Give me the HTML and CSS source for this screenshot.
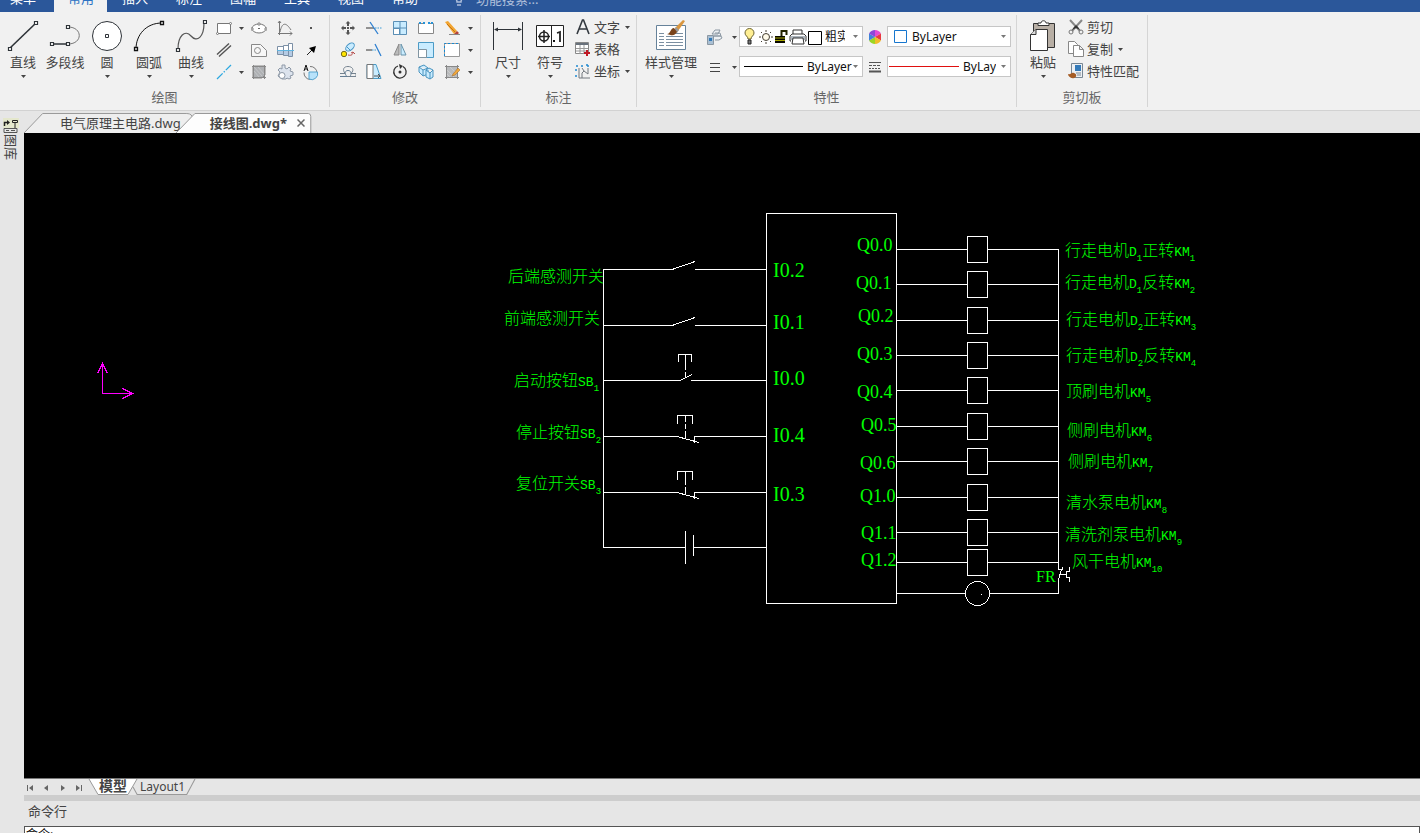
FILE: index.html
```html
<!DOCTYPE html>
<html lang="zh-CN">
<head>
<meta charset="utf-8">
<title>接线图.dwg</title>
<link rel="stylesheet" href="styles.css">
</head>
<body>
<svg class="defs" aria-hidden="true">
  <symbol id="caret" viewBox="0 0 5 3"><path d="M0 0h5L2.500 3z" fill="currentColor"/></symbol>
  <symbol id="coil" viewBox="0 0 22 28"><rect x=".5" y=".5" width="20" height="26" fill="#000" stroke="#fff"/></symbol>
</svg>

<nav class="menubar">
  <a class="menu" href="#">菜单</a>
  <a class="menu menu-active" href="#">常用</a>
  <a class="menu" href="#">插入</a>
  <a class="menu" href="#">标注</a>
  <a class="menu" href="#">图幅</a>
  <a class="menu" href="#">工具</a>
  <a class="menu" href="#">视图</a>
  <a class="menu" href="#">帮助</a>
  <label class="search">
    <svg width="10" height="16" viewBox="0 0 10 16" fill="none" stroke="#aebfdb" stroke-width="1.500"><path d="M3 11C3 8 1 8 1 5a4 4 0 0 1 8 0c0 3-2 3-2 6zM3 14h4"/></svg>
    <input type="text" placeholder="功能搜索...">
  </label>
</nav>

<header class="ribbon">
  <section class="group">
    <div class="tools draw">
      <button class="big"><svg width="32" height="32" viewBox="0 0 32 32" fill="#fff" stroke="#2e3338"><path d="M3 28L29 3" stroke-width="1.600"/><path d="M1.500 27.500h3v3h-3zM27.500 1.500h3v3h-3z" stroke-width="1.200"/></svg><span>直线</span><svg class="caret"><use href="#caret"/></svg></button>
      <button class="big"><svg width="32" height="32" viewBox="0 0 32 32" fill="none" stroke="#2e3338"><path d="M3 24h16" stroke-width="1.500"/><path d="M19 24c15 0 15-17 0-17" stroke="#777"/><path d="M1.500 22.500h3v3h-3zM17.500 22.500h3v3h-3zM17.500 5.500h3v3h-3z" fill="#fff" stroke-width="1.200"/></svg><span>多段线</span></button>
      <button class="big"><svg width="32" height="32" viewBox="0 0 32 32" fill="#fff" stroke="#2e3338"><circle cx="16" cy="16" r="14.500"/><path d="M14.500 14.500h3v3h-3z"/></svg><span>圆</span><svg class="caret"><use href="#caret"/></svg></button>
      <button class="big"><svg width="32" height="32" viewBox="0 0 32 32" fill="none" stroke="#111"><path d="M3 29C3 15 13 3 29 3"/><path d="M1.500 27.500h3v3h-3zM27.500 1.500h3v3h-3z" fill="#fff" stroke-width="1.300"/></svg><span>圆弧</span><svg class="caret"><use href="#caret"/></svg></button>
      <button class="big"><svg width="32" height="32" viewBox="0 0 32 32" fill="none" stroke="#555"><path d="M3 29c0-13 7-20 13-13s13 1 13-13" stroke-width="1.200"/><path d="M1.500 28.500h3v3h-3zM28.500.500h3v3h-3z" fill="#fff" stroke="#2e3338" stroke-width="1.200"/></svg><span>曲线</span><svg class="caret"><use href="#caret"/></svg></button>
      <div class="grid draw-grid">
        <button class="small"><svg width="16" height="16" viewBox="0 0 16 16" fill="#fff" stroke="#777"><path d="M1.500 3.500h13v10h-13z"/><circle cx="1.500" cy="13.500" r="1"/><circle cx="14.500" cy="3.500" r="1"/></svg></button>
        <button class="small"><svg class="caret"><use href="#caret"/></svg></button>
        <button class="small"><svg width="16" height="16" viewBox="0 0 16 16" fill="#fff" stroke="#777"><ellipse cx="8" cy="8.500" rx="7" ry="4.500"/><path d="M7 3h2v2H7zM0 8h2v2H0zM14 8h2v2h-2z" stroke="#888"/><path d="M7 8h2v1H7z" fill="#666" stroke="none"/></svg></button>
        <button class="small"><svg width="16" height="16" viewBox="0 0 16 16" fill="none" stroke="#777"><path d="M2.500 1v14M1 13.500h14M13 11.500l2 2-2 2M1 3l1.500-2L4 3M3 12C5 2 9 2 14 10"/></svg></button>
        <button class="small"><svg width="16" height="16" viewBox="0 0 16 16"><path d="M7 7h2v2H7z" fill="#555"/></svg></button>

        <button class="small"><svg width="16" height="16" viewBox="0 0 16 16" fill="none" stroke="#555" stroke-width="1.400"><path d="M1 12.500L13 1.500M3 14.500L15 3.500"/></svg></button>
        <span></span>
        <button class="small"><svg width="16" height="16" viewBox="0 0 16 16" fill="#f7f7f7" stroke="#888"><path d="M.500 2.500h9l6 6v6H.500z"/><circle cx="6.500" cy="8.500" r="3"/></svg></button>
        <button class="small"><svg width="17" height="16" viewBox="0 0 17 16" fill="#b5cbe4" stroke="#7c90a6"><path d="M.500 4.500h6v8h-6zM6.500 3.500h5v10h-5zM11.500 1.500h4v13h-4z"/><path d="M1 5h5v3H1zM7 4h4v4H7zM12 2h3v6h-3z" fill="#fff" stroke="none"/><path d="M0 8.500h17" stroke="#5fb4e0"/></svg></button>
        <button class="small"><svg width="16" height="16" viewBox="0 0 16 16"><path d="M4 13l5-5" stroke="#222"/><path d="M13 4l-2 7-5-5z" fill="#000"/></svg></button>

        <button class="small"><svg width="16" height="16" viewBox="0 0 16 16" fill="none" stroke="#2da8e0" stroke-width="1.300"><path d="M1 15L15 1" stroke-dasharray="8 1.500 1.500 1.500"/></svg></button>
        <button class="small"><svg class="caret"><use href="#caret"/></svg></button>
        <button class="small"><svg width="16" height="16" viewBox="0 0 16 16" fill="none" stroke="#888"><path d="M2 2h12v9l-3 3H2z" fill="#aeb0b3"/><path d="M2.500 1v14M1 2.500h14M1 13.500h14M13.500 1v14"/><path d="M3 7l5 6M3 3l8 9M7 3l6 7" stroke="#c4c6c8"/></svg></button>
        <button class="small"><svg width="17" height="16" viewBox="0 0 17 16" fill="#dce3ed" stroke="#8d98a6"><path d="M5 1h3v3l2 1 2-2 2 2-1 2 3 1v3l-3 1 1 2-2 1-2-1-1 1H5l-4-3 2-4-2-2 2-2 2 1z"/><circle cx="5" cy="11.500" r="3" fill="#fff"/></svg></button>
        <button class="small"><svg width="18" height="17" viewBox="0 0 18 17" fill="none" stroke="#777"><path d="M8 2.500a6.500 6.500 0 1 1-6 6"/><path d="M7 8h8.500a6 6 0 0 1-8.500 7z" fill="#b8e2fa" stroke="#5aa6cf"/><path d="M2 7l2-6 2 6M3 5h2" stroke="#111"/></svg></button>
      </div>
    </div>
    <h2>绘图</h2>
  </section>

  <section class="group">
    <div class="tools">
      <div class="grid edit-grid">
        <button class="small"><svg width="16" height="16" viewBox="0 0 16 16" fill="#555"><path d="M7 7h2v2H7zM8 1l2.500 2.500H9V6H7V3.500H5.500zM8 15l2.500-2.500H9V10H7v2.500H5.500zM1 8l2.500-2.500V7H6v2H3.500v1.500zM15 8l-2.500-2.500V7H10v2h2.500v1.500z"/></svg></button>
        <button class="small"><svg width="16" height="16" viewBox="0 0 16 16" fill="none"><path d="M0 8h8" stroke="#333"/><path d="M9 8h7" stroke="#3a9bd6" stroke-dasharray="1.500 1"/><path d="M4 2l8 12" stroke="#2c7ed0" stroke-width="1.300"/></svg></button>
        <button class="small"><svg width="16" height="16" viewBox="0 0 16 16" stroke="#5b8fb5"><path d="M1.500 1.500h13v13h-13z" fill="#c9ecff"/><path d="M1.500 8.500h6v6h-6zM8.500 1.500" fill="#fff"/><path d="M8 1v14M1 8h14"/></svg></button>
        <button class="small"><svg width="16" height="16" viewBox="0 0 16 16" fill="none"><path d="M6 3.500H.500v10h15v-10H10" fill="#fff" stroke="#888"/><path d="M5 2h2v2H5zM10 2h2v2h-2zM1 2h2v2H1zM13 2h2v2h-2z" fill="#2693d8"/></svg></button>
        <button class="small"><svg width="16" height="16" viewBox="0 0 16 16"><path d="M1 2l3-1 9 10-3 3z" fill="#f2a531"/><path d="M3 4l8 8" stroke="#c57412"/><path d="M10 14l3-3 2 2-2 2z" fill="#b3423a"/><path d="M5 14.500h11" stroke="#888"/></svg></button>
        <button class="small"><svg class="caret"><use href="#caret"/></svg></button>

        <button class="small"><svg width="16" height="16" viewBox="0 0 16 16"><circle cx="4" cy="12" r="2.700" fill="#ffe400" stroke="#746c20"/><ellipse cx="10" cy="5" rx="5" ry="3" transform="rotate(-40 10 5)" fill="#c9ecff" stroke="#4594c5"/><path d="M7 5l4 4" stroke="#4594c5"/><path d="M8 13c4 1 5-1 5-3l-2 1m2-1l2 2" stroke="#b44b4b" fill="none"/></svg></button>
        <button class="small"><svg width="16" height="16" viewBox="0 0 16 16" fill="none"><path d="M0 8h6" stroke="#333"/><path d="M6 8h5" stroke="#3a9bd6" stroke-dasharray="1.500 1"/><path d="M9 2l6 12" stroke="#2c7ed0" stroke-width="1.300"/></svg></button>
        <button class="small"><svg width="16" height="16" viewBox="0 0 16 16"><path d="M7 2v11H2z" fill="#bbb" stroke="#888"/><path d="M9 2v11h5z" fill="#c9ecff" stroke="#6993aa"/></svg></button>
        <button class="small"><svg width="16" height="16" viewBox="0 0 16 16"><path d="M.500.500h15v15H.500z" fill="#c9ecff" stroke="#4c9bc6"/><path d="M.500 7.500h8v8h-8z" fill="#fff" stroke="#8295a1"/></svg></button>
        <button class="small"><svg width="16" height="16" viewBox="0 0 16 16"><path d="M.500 1.500h15v13H.500z" fill="#fff" stroke="#999"/><path d="M.500 14V1.500h15" stroke="#1689d3" stroke-dasharray="2 2" fill="none"/></svg></button>
        <button class="small"><svg class="caret"><use href="#caret"/></svg></button>

        <button class="small"><svg width="16" height="16" viewBox="0 0 16 16" fill="none" stroke="#74828f"><path d="M0 9.500h5C2 5 4 2.500 8 2.500s7 3 3 7h5v3H0"/><path d="M0 12.500h7c-3-3-2-6 1-6s4 3 2 6" stroke="#637d94"/></svg></button>
        <button class="small"><svg width="16" height="16" viewBox="0 0 16 16"><path d="M1 .500h9l5 14H1z" fill="#c9ecff" stroke="#4c9bc6"/><path d="M1 .500h6v14H1z" fill="#fff" stroke="#777"/><path d="M8 12h6m-2-2l2 2-2 2" stroke="#555" fill="none"/></svg></button>
        <button class="small"><svg width="16" height="16" viewBox="0 0 16 16"><path d="M6 2a6.200 6.200 0 1 0 5 .500" fill="none" stroke="#333" stroke-width="1.300"/><path d="M7 0l4 2-3 3z" fill="#333"/><circle cx="8" cy="8" r="1.500" fill="#333"/></svg></button>
        <button class="small"><svg width="16" height="16" viewBox="0 0 16 16" fill="#c9ecff" stroke="#4a94bf"><path d="M1 3l5-2 4 3v6l-5 2-4-4zM1 3l4 3 5-2M5 6v6"/><path d="M8 6l3-2 4 2v7l-3 2-4-2zM8 6l4 3 3-3M12 9v6"/></svg></button>
        <button class="small"><svg width="16" height="16" viewBox="0 0 16 16"><path d="M2 2h11v11H2z" fill="#b9bbbd"/><path d="M1 2.500h14M1 13.500h14M2.500 1v14M13.500 1v14" stroke="#888"/><path d="M3 6l7 7M3 10l3 3M6 3l7 7" stroke="#ccc"/><path d="M9 10l5-6 2 2-5 5-3 1z" fill="#f1a83b" stroke="#9b6427" stroke-width=".500"/></svg></button>
        <button class="small"><svg class="caret"><use href="#caret"/></svg></button>
      </div>
    </div>
    <h2>修改</h2>
  </section>

  <section class="group">
    <div class="tools annotate">
      <button class="big"><svg width="32" height="32" viewBox="0 0 32 32" stroke="#2e3338" fill="none"><path d="M1.500 2v28M30.500 2v28M3 9.500h26"/><path d="M2 9.500l4-2v4zM30 9.500l-4-2v4z" fill="#2e3338" stroke="none"/></svg><span>尺寸</span><svg class="caret"><use href="#caret"/></svg></button>
      <button class="big"><svg width="32" height="32" viewBox="0 0 32 32" stroke="#222" fill="none"><path d="M2.500 5.500h27v21h-27zM17.500 5.500v21" fill="#fff"/><circle cx="10" cy="16.500" r="4.500" stroke-width="1.500"/><path d="M4 16.500h12M10 10v13" stroke-width="1.500"/><path d="M19 20h2v2h-2z" fill="#111" stroke="none"/><path d="M23 13l3-1v10" stroke-width="1.800"/></svg><span>符号</span><svg class="caret"><use href="#caret"/></svg></button>
      <div class="stack">
        <button class="wide"><svg width="16" height="16" viewBox="0 0 16 16" fill="none" stroke="#33393f" stroke-width="1.600"><path d="M2 15L7.500 1h1L14 15M4.500 10h7"/></svg><span>文字</span><svg class="caret"><use href="#caret"/></svg></button>
        <button class="wide"><svg width="16" height="16" viewBox="0 0 16 16"><path d="M.500 1.500h13v11H.500z" fill="#fff" stroke="#888"/><path d="M1 2h12v2H1z" fill="#68717b"/><path d="M1 7.500h12M1 10h12M5 4v9M9 4v9" stroke="#999"/><path d="M9 12h6M12 9v6" stroke="#c01824" stroke-width="2"/></svg><span>表格</span></button>
        <button class="wide"><svg width="16" height="16" viewBox="0 0 16 16" fill="none" stroke="#72787e"><path d="M4 5v10h11M7 15v-5l2-2 4 3V5M7 5l2 3"/><path d="M1 3h2M6 3h2M12 3h2M1 6v2M1 12v2M12 1v2" stroke="#2189cf" stroke-width="1.500"/></svg><span>坐标</span><svg class="caret"><use href="#caret"/></svg></button>
      </div>
    </div>
    <h2>标注</h2>
  </section>

  <section class="group">
    <div class="tools properties">
      <button class="big style-button"><svg width="32" height="32" viewBox="0 0 32 32"><path d="M1.500 5.500h29v24h-29z" fill="#fff" stroke="#66829a"/><path d="M4 13.500h5M4 16.500h5M4 19.500h5M4 22.500h5M4 25.500h5M11 16.500h17M11 19.500h17M11 22.500h17M11 25.500h17M20 13.500h8" stroke="#7b8fa1"/><path d="M20 8l8-8 2 1-7 10z" fill="#d9963f"/><path d="M21 7l3 3-2 3-3-3z" fill="#999"/><path d="M19 8l3 4c-3 5-6 3-10 2 4 0 3-6 7-6z" fill="#7a4319"/></svg><span>样式管理</span><svg class="caret"><use href="#caret"/></svg></button>
      <div class="property-grid">
        <button class="small"><svg width="16" height="16" viewBox="0 0 16 16" fill="#eef1f4" stroke="#8b97a2"><path d="M5 5l3-4h5l-2 4zM7 7h7l1 2-3 2H8M8 4h5l1 3H7"/><path d="M.500 6.500h6v9h-6z" fill="#a9bfd3"/><path d="M2 9h3v3H2z" fill="#3279b7" stroke="none"/></svg></button>
        <button class="small"><svg class="caret"><use href="#caret"/></svg></button>
        <div class="combo">
          <svg class="layer-icons" width="78" height="18" viewBox="0 0 78 18" fill="none">
            <path d="M4 11C4 8 1 8 1 5a4.500 4.500 0 0 1 9 0c0 3-3 3-3 6z" fill="#ffef93" stroke="#6b6331"/><path d="M4 12h3v4H4z" fill="#777" stroke="#222"/>
            <circle cx="22" cy="9" r="3.500" fill="#fffbea" stroke="#443e33"/><path d="M22 2v2M22 14v2M15 9h2M27 9h2M17 4l1 1M26 13l1 1M17 14l1-1M26 5l1-1" stroke="#443e33"/>
            <path d="M31 8h10v7H31z" fill="#080800"/><path d="M31 10h10M31 12.500h10" stroke="#aaa800"/><path d="M37.500 8V3h5v4" stroke="#222200" stroke-width="2"/>
            <path d="M49 6V2h9v4M47 13h-1V8l2-2h12l2 2v5h-1" fill="#fff" stroke="#333"/><path d="M47 8h14v4H47z" fill="#aeb6be"/><path d="M49 10h10l1 6H48z" fill="#fff" stroke="#333"/>
            <path d="M64.500 3.500h13v13h-13z" fill="#fff" stroke="#000"/>
          </svg>
          <select class="layer-select" aria-label="图层"><option>粗实线层</option></select>
          <svg class="caret"><use href="#caret"/></svg>
        </div>
        <button class="small"><svg width="14" height="14" viewBox="0 0 14 14"><path d="M7 7V0a7 7 0 0 1 6 3.500z" fill="#e44ad2"/><path d="M7 7l6-3.500v7z" fill="#e83a3f"/><path d="M7 7l6 3.500A7 7 0 0 1 7 14z" fill="#f1bd28"/><path d="M7 7v7a7 7 0 0 1-6-3.500z" fill="#9bd624"/><path d="M7 7l-6 3.500v-7z" fill="#3f83d9"/><path d="M7 7L1 3.500A7 7 0 0 1 7 0z" fill="#8b47d8"/></svg></button>
        <div class="combo">
          <svg class="swatch" width="13" height="13" viewBox="0 0 13 13"><path d="M.500.500h12v12H.500z" fill="#fff" stroke="#1676ce"/></svg>
          <select aria-label="颜色"><option>ByLayer</option></select>
          <svg class="caret"><use href="#caret"/></svg>
        </div>

        <button class="small"><svg width="10" height="10" viewBox="0 0 10 10" stroke="#444"><path d="M0 1.500h10M0 5.500h10M0 9.500h10"/></svg></button>
        <button class="small"><svg class="caret"><use href="#caret"/></svg></button>
        <div class="combo">
          <svg class="line-a" width="59" height="3"><path d="M0 1.500h59" stroke="#000"/></svg>
          <select class="linetype" aria-label="线型"><option>ByLayer</option></select>
          <svg class="caret"><use href="#caret"/></svg>
        </div>
        <button class="small"><svg width="12" height="11" viewBox="0 0 12 11" stroke="#555"><path d="M0 .500h12"/><path d="M0 3.500h12" stroke-dasharray="3 1"/><path d="M0 6.500h12" stroke-dasharray="2 1"/><path d="M0 9.500h12" stroke-width="2"/></svg></button>
        <div class="combo">
          <svg class="line-b" width="70" height="3"><path d="M0 1.500h70" stroke="#e01010"/></svg>
          <select class="lineweight" aria-label="线宽"><option>ByLayer</option></select>
          <svg class="caret"><use href="#caret"/></svg>
        </div>
      </div>
    </div>
    <h2>特性</h2>
  </section>

  <section class="group">
    <div class="tools clipboard">
      <button class="big"><svg width="32" height="32" viewBox="0 0 32 32" stroke="#333"><path d="M6.500 3.500h21v24h-21z" fill="#b8afa5"/><path d="M11 5.500V3h3c0-3 5-3 5 0h3v2.500z" fill="#fff"/><path d="M9 9.500h11.500v21h-17v-16z" fill="#fff"/><path d="M3.500 14.500H9v-5" fill="#ddd"/></svg><span>粘贴</span><svg class="caret"><use href="#caret"/></svg></button>
      <div class="stack">
        <button class="wide"><svg width="16" height="16" viewBox="0 0 16 16" fill="none"><path d="M2 1l10 11M14 1L4 12" stroke="#888" stroke-width="2"/><path d="M6 8l2-2 2 2 2 3-4-2-4 2z" fill="#333"/><circle cx="3" cy="13" r="2" stroke="#777"/><circle cx="13" cy="13" r="2" stroke="#777"/></svg><span>剪切</span></button>
        <button class="wide"><svg width="16" height="16" viewBox="0 0 16 16" fill="#fff" stroke="#888"><path d="M.500.500h6l3 3v9h-9z"/><path d="M5.500 4.500h6l4 4v7h-10zM11.500 4.500v4h4"/></svg><span>复制</span><svg class="caret"><use href="#caret"/></svg></button>
        <button class="wide"><svg width="16" height="16" viewBox="0 0 16 16"><path d="M3.500.500h11v14h-11z" fill="#edf0f3" stroke="#788693"/><path d="M7 2h6v6H7z" fill="#347ab9"/><path d="M8 10h5M9 12h4" stroke="#788693"/><path d="M0 11c3 1 3-2 6-1s3 4 0 5-6-2-6-4z" fill="#a55c25"/></svg><span>特性匹配</span></button>
      </div>
    </div>
    <h2>剪切板</h2>
  </section>
</header>

<div class="workspace">
  <aside class="palette">
    <svg width="16" height="16" viewBox="0 0 16 16" fill="none" stroke="#222"><path d="M0 0h16v10H0z" fill="#e4e7cc" stroke="none"/><path d="M1.500 8V4.500h3" stroke-width="1.500"/><path d="M4 2l3 2.500L4 7z" fill="#222" stroke="none"/><path d="M9.500 2.500h5v2h-5zM12 4v6"/><path d="M1 10.500h13v4H1zM3 12.500h3M8 12.500h4" stroke="#555"/></svg>
    <span>图库</span>
  </aside>
  <main class="document">
    <div class="doc-tabs">
      <button class="doc-tab"><svg class="tab-shape" viewBox="0 0 172 20" preserveAspectRatio="none"><path d="M0 20L19 .500h147q6 0 6 6V20" fill="#eee" stroke="#999"/></svg><span>电气原理主电路.dwg</span></button>
      <button class="doc-tab doc-tab-active"><svg class="tab-shape" viewBox="0 0 136 20" preserveAspectRatio="none"><path d="M0 20L19 .500h114q2.500 0 2.500 3V20" fill="#fdfdfd" stroke="#999"/></svg><span>接线图.dwg*</span><svg class="close" width="8" height="8" viewBox="0 0 8 8"><path d="M.500.500l7 7M7.500.500l-7 7" stroke="#666" stroke-width="1.500"/></svg></button>
    </div>

    <svg class="drawing">
      <g transform="translate(-24 -133)">
        <g class="ucs"><path d="M102.500 363v30.500h30M97.500 373.500l5-10 5 10M122.500 388.500l10 5-10 5"/></g>
        <g class="wires">
          <path d="M603.500 269v278.500H685.500M603 269.500h69l23-8M695 269.500h71M603 325.500h69l23-8M695 325.500h71M603 380.500h77l12-6M691 380.500h75"/>
          <path d="M678.500 362v-7.500h13v7.500M685.500 354v16M685.500 372v6"/>
          <path d="M603 436.500h74l22 6M694.500 443v-6.500H766M677.500 424v-8.500h15v8.500M685.500 415v7M685.500 424v5M685.500 431v8"/>
          <path d="M603 492.500h74l22 6M694.500 499v-6.500H766M677.500 480v-8.500h15v8.500M685.500 471v14M685.500 487v8"/>
          <path d="M685.500 531v33M693.500 535v21M693 547.500h73"/>
          <rect x="766.500" y="213.500" width="130" height="390"/>
          <path d="M896 249.500h162.500V569M896 284.500h162M896 320.500h162M896 355.500h162M896 390.500h162M896 426.500h162M896 461.500h162M896 497.500h162M896 532.500h162M896 562.500h162"/>
          <path d="M896 593.500h69M990 593.500h68.500V580l3-11M1058 569.500h4.500v-3M1060 574.500h6M1069.500 567v4.500h-3v6h3v4"/>
          <circle cx="977.500" cy="593.500" r="12"/><path d="M981 594.500h1"/>
        </g>
        <use href="#coil" x="967" y="236" width="22" height="28"/>
        <use href="#coil" x="967" y="271" width="22" height="28"/>
        <use href="#coil" x="967" y="307" width="22" height="28"/>
        <use href="#coil" x="967" y="342" width="22" height="28"/>
        <use href="#coil" x="967" y="377" width="22" height="28"/>
        <use href="#coil" x="967" y="413" width="22" height="28"/>
        <use href="#coil" x="967" y="448" width="22" height="28"/>
        <use href="#coil" x="967" y="484" width="22" height="28"/>
        <use href="#coil" x="967" y="519" width="22" height="28"/>
        <use href="#coil" x="967" y="549" width="22" height="28"/>
        <g class="labels">
          <text x="508" y="282">后端感测开关</text>
          <text x="504" y="324">前端感测开关</text>
          <text x="514" y="386">启动按钮<tspan class="code">SB</tspan><tspan class="sub" dy="5">1</tspan></text>
          <text x="516" y="438">停止按钮<tspan class="code">SB</tspan><tspan class="sub" dy="5">2</tspan></text>
          <text x="516" y="489">复位开关<tspan class="code">SB</tspan><tspan class="sub" dy="5">3</tspan></text>
          <text x="1065" y="256">行走电机<tspan class="code">D</tspan><tspan class="sub" dy="5">1</tspan><tspan dy="-5">正转</tspan><tspan class="code">KM</tspan><tspan class="sub" dy="5">1</tspan></text>
          <text x="1065" y="288">行走电机<tspan class="code">D</tspan><tspan class="sub" dy="5">1</tspan><tspan dy="-5">反转</tspan><tspan class="code">KM</tspan><tspan class="sub" dy="5">2</tspan></text>
          <text x="1066" y="325">行走电机<tspan class="code">D</tspan><tspan class="sub" dy="5">2</tspan><tspan dy="-5">正转</tspan><tspan class="code">KM</tspan><tspan class="sub" dy="5">3</tspan></text>
          <text x="1066" y="361">行走电机<tspan class="code">D</tspan><tspan class="sub" dy="5">2</tspan><tspan dy="-5">反转</tspan><tspan class="code">KM</tspan><tspan class="sub" dy="5">4</tspan></text>
          <text x="1066" y="397">顶刷电机<tspan class="code">KM</tspan><tspan class="sub" dy="5">5</tspan></text>
          <text x="1067" y="436">侧刷电机<tspan class="code">KM</tspan><tspan class="sub" dy="5">6</tspan></text>
          <text x="1068" y="467">侧刷电机<tspan class="code">KM</tspan><tspan class="sub" dy="5">7</tspan></text>
          <text x="1066" y="508">清水泵电机<tspan class="code">KM</tspan><tspan class="sub" dy="5">8</tspan></text>
          <text x="1065" y="540">清洗剂泵电机<tspan class="code">KM</tspan><tspan class="sub" dy="5">9</tspan></text>
          <text x="1072" y="567">风干电机<tspan class="code">KM</tspan><tspan class="sub" dy="5">10</tspan></text>
          <text class="relay" x="1036" y="582">FR</text>
        </g>
        <g class="inputs">
          <text x="773" y="277">I0.2</text><text x="773" y="329">I0.1</text><text x="773" y="385">I0.0</text><text x="773" y="442">I0.4</text><text x="773" y="501">I0.3</text>
        </g>
        <g class="outputs">
          <text x="857" y="251">Q0.0</text><text x="856" y="289">Q0.1</text><text x="858" y="322">Q0.2</text><text x="857" y="360">Q0.3</text><text x="857" y="398">Q0.4</text><text x="861" y="431">Q0.5</text><text x="860" y="469">Q0.6</text><text x="860" y="502">Q1.0</text><text x="861" y="539">Q1.1</text><text x="861" y="566">Q1.2</text>
        </g>
      </g>
    </svg>

    <div class="layout-tabs">
      <button class="pager"><svg width="7" height="8" viewBox="0 0 7 8" fill="#666"><path d="M0 1h1v6H0zM6 1v6L2 4z"/></svg></button>
      <button class="pager"><svg width="7" height="8" viewBox="0 0 7 8" fill="#666"><path d="M5 1v6L1 4z"/></svg></button>
      <button class="pager"><svg width="7" height="8" viewBox="0 0 7 8" fill="#666"><path d="M2 1v6l4-3z"/></svg></button>
      <button class="pager"><svg width="7" height="8" viewBox="0 0 7 8" fill="#666"><path d="M6 1h1v6H6zM1 1v6l4-3z"/></svg></button>
      <button class="layout-tab layout-active"><svg class="tab-shape" viewBox="0 0 48 16" preserveAspectRatio="none"><path d="M0 0l9 15.500h30L48 0" fill="#fff" stroke="#999"/></svg><span>模型</span></button>
      <button class="layout-tab"><svg class="tab-shape" viewBox="0 0 60 16" preserveAspectRatio="none"><path d="M0 8l4 7.500h48L60 0" fill="none" stroke="#999"/></svg><span>Layout1</span></button>
    </div>
    <div class="splitter"></div>
    <div class="command">
      <label for="cmd">命令行</label>
      <input id="cmd" type="text" value="命令:">
    </div>
  </main>
</div>
</body>
</html>
```

FILE: styles.css
```css
* { box-sizing: border-box; }
body {
  margin: 0;
  height: 100vh;
  display: flex;
  flex-direction: column;
  overflow: hidden;
  background: #e6e6e6;
  color: #444;
  font: 13px/20px "Noto Sans", "Noto Sans CJK SC", sans-serif;
}
button, input, select { font: inherit; color: inherit; }
button { border: 0; padding: 0; background: none; }
svg { display: block; flex: none; }
.defs { position: absolute; width: 0; height: 0; }
.caret { width: 5px; height: 3px; color: #444; }

.menubar {
  display: flex;
  align-items: flex-end;
  height: 12px;
  overflow: hidden;
  background: #2b579a;
  flex: none;
}
.menu {
  width: 54px;
  height: 26px;
  line-height: 24px;
  padding-left: 10px;
  color: #fff;
  text-decoration: none;
}
.menu-active { width: 53px; padding-left: 14px; margin-right: 5px; background: #f1f1f1; color: #2b72c4; }
.search { display: flex; align-items: center; height: 26px; gap: 12px; margin-left: 18px; }
.search input { width: 120px; border: 0; padding: 0; background: none; }
.search input::placeholder { color: #aebfdb; opacity: 1; }

.ribbon {
  display: flex;
  height: 99px;
  flex: none;
  background: #f1f1f1;
  border-bottom: 1px solid #d2d2d2;
}
.group { display: flex; flex-direction: column; margin: 3px 0; padding: 0 5px 0 1px; border-right: 1px solid #d5d5d5; }
.group h2 { margin: auto -4px 0 0; font-size: 13px; line-height: 20px; font-weight: 400; color: #666; text-align: center; }
.tools { display: flex; align-items: flex-start; height: 68px; }
.big { display: flex; flex-direction: column; align-items: center; width: 42px; padding-top: 5px; white-space: nowrap; }
.big .caret { margin-top: 3px; }
.small { display: flex; align-items: center; justify-content: center; height: 22px; }
.grid { display: grid; grid-auto-rows: 22px; padding-top: 2px; }
.draw { padding-left: 1px; }
.draw-grid { grid-template-columns: 24px 10px 26px 26px 26px; }
.edit-grid { grid-template-columns: repeat(5, 26px) 10px; padding-left: 4px; }
.stack { display: flex; flex-direction: column; padding-top: 1px; }
.wide { display: flex; align-items: center; gap: 3px; height: 22px; }
.wide .caret { margin-left: 2px; }
.annotate { padding-left: 5px; padding-right: 1px; }
.annotate .stack { padding-left: 4px; }
.style-button { width: 60px; margin-left: 3px; }
.property-grid {
  display: grid;
  grid-template-columns: 28px 10px 124px 24px 124px;
  grid-template-rows: 21px 21px;
  row-gap: 9px;
  padding-top: 11px;
}
.combo { position: relative; display: flex; align-items: center; height: 21px; background: #fff; border: 1px solid #c6c6c6; color: #111; }
.combo select {
  appearance: none;
  flex: 1;
  min-width: 0;
  height: 19px;
  margin: 0;
  padding: 0 14px 0 5px;
  border: 0;
  background: none;
  font-size: 12px;
  line-height: 18px;
}
.combo .caret { position: absolute; right: 4px; top: 8px; color: #777; pointer-events: none; }
.layer-icons { margin-left: 4px; }
.combo .layer-select { padding-left: 3px; padding-right: 17px; }
.swatch { margin-left: 6px; }
.line-a { margin-left: 4px; }
.line-b { margin-left: 1px; }
.combo .linetype, .combo .lineweight { padding-left: 4px; }
.combo .linetype { padding-right: 9px; }
.clipboard { padding-left: 4px; padding-right: 3px; }
.clipboard .stack { padding-left: 4px; }

.workspace { flex: 1; min-height: 0; display: flex; }
.palette { width: 24px; flex: none; padding: 7px 0 0 3px; }
.palette span { display: block; writing-mode: vertical-rl; text-orientation: sideways; line-height: 16px; font-size: 13px; }
.document { flex: 1; min-width: 0; display: flex; flex-direction: column; }
.doc-tabs { display: flex; align-items: flex-end; height: 22px; flex: none; }
.doc-tab { position: relative; height: 20px; padding: 0 12px 0 36px; line-height: 18px; }
.doc-tab span { position: relative; }
.doc-tab-active { display: flex; align-items: center; gap: 10px; margin-left: -17px; padding: 0 6px 0 34px; font-weight: 700; }
.close { position: relative; }
.tab-shape { position: absolute; left: 0; top: 0; width: 100%; height: 100%; overflow: visible; }

.drawing { flex: 1; min-height: 0; width: 100%; background: #000; }
.wires { fill: none; stroke: #fff; shape-rendering: crispEdges; }
.ucs { fill: none; stroke: #f0f; shape-rendering: crispEdges; }
.labels, .inputs, .outputs { fill: #0f0; }
.labels { font: 300 16px "Noto Sans CJK SC", sans-serif; }
.code { font: 13px "Liberation Mono", monospace; }
.sub { font: 9px "Liberation Mono", monospace; }
.labels .relay { font: 16px "Liberation Serif", serif; }
.inputs { font: 20px "Liberation Serif", serif; }
.outputs { font: 18px "Liberation Serif", serif; }

.layout-tabs { display: flex; height: 17px; flex: none; border-top: 1px solid #777; padding-left: 3px; }
.pager { display: flex; align-items: center; width: 16px; height: 17px; }
.layout-tab { position: relative; height: 16px; line-height: 12px; padding: 0 10px 2px; }
.layout-tab span { position: relative; font-size: 12px; }
.layout-active { margin-left: -2px; font-weight: 700; }
.layout-active span { font-size: 14px; }
.layout-tab + .layout-tab { margin-left: -4px; padding-left: 7px; }
.splitter { height: 6px; flex: none; background: #cdcdcd; }
.command { display: flex; flex-direction: column; height: 32px; flex: none; overflow: hidden; }
.command label { padding: 0 4px 5px; line-height: 20px; }
.command input {
  width: 100%;
  height: 14px;
  flex: none;
  padding: 0 1px;
  border: 1px solid #555;
  background: #fff;
  color: #000;
  font: 12px/12px "Noto Sans CJK SC", sans-serif;
}
```
